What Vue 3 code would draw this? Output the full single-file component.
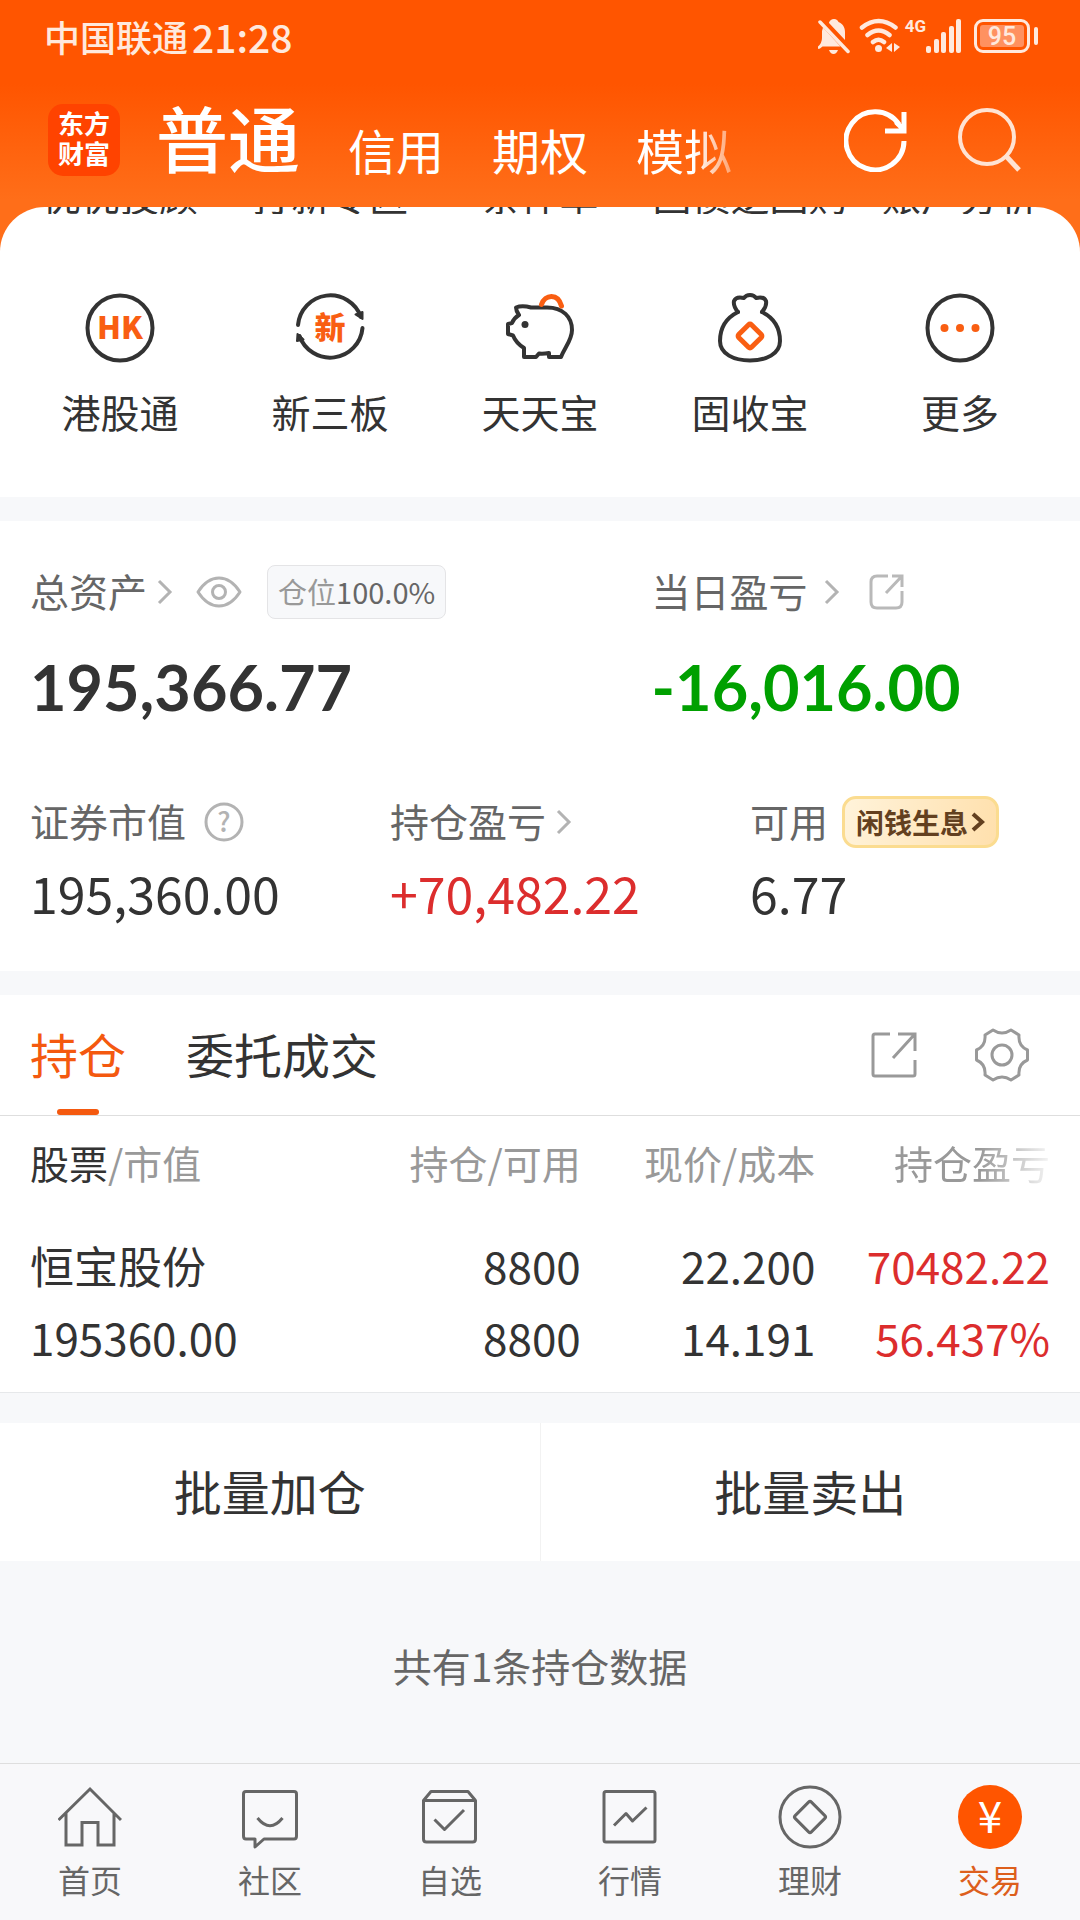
<script setup>
import { ref } from 'vue'

const accountTabs = ['普通', '信用', '期权', '模拟']
const activeAccount = ref('普通')

const clippedEntries = ['优优投顾', '打新专区', '条件单', '国债逆回购', '账户分析']
const entries = [
  { id: 'hk', label: '港股通' },
  { id: 'neeq', label: '新三板' },
  { id: 'pig', label: '天天宝' },
  { id: 'bag', label: '固收宝' },
  { id: 'more', label: '更多' },
]

const listTabs = ['持仓', '委托成交']
const activeList = ref('持仓')

const holdings = [
  {
    name: '恒宝股份',
    value: '195360.00',
    amount: '8800',
    available: '8800',
    price: '22.200',
    cost: '14.191',
    profit: '70482.22',
    rate: '56.437%',
  },
]

const navItems = [
  { id: 'home', label: '首页' },
  { id: 'community', label: '社区' },
  { id: 'watch', label: '自选' },
  { id: 'market', label: '行情' },
  { id: 'wealth', label: '理财' },
  { id: 'trade', label: '交易' },
]
const activeNav = ref('trade')
</script>

<template>
  <div class="page">
    <div class="top">
      <div class="status">
        <span class="carrier">中国联通</span>
        <span class="clock">21:28</span>
        <div class="status-icons">
          <svg class="bell" width="32" height="36" viewBox="0 0 32 36" fill="currentColor">
            <path d="M11 4.500C12 2.500 13.500 1 16 1s4 1.500 4.500 3C25 6 27 9.500 27 14v8L11 5z" />
            <path d="M5 9.500 22.500 28.500H4.500Q1 32 0 30.500V28.500Q4 25 4 20V13z" />
            <path d="M2 4 30 33.500" stroke="currentColor" stroke-width="3.500" stroke-linecap="round" />
            <path d="M11 32h9q-1.500 4-4.500 4T11 32z" />
          </svg>
          <svg class="wifi" width="42" height="36" viewBox="0 0 42 36" fill="none" stroke="currentColor" stroke-width="4.500" stroke-linecap="round">
            <path d="M3 9.500Q19.500-3.500 36.500 9.500M8.500 17Q19.500 8 30.500 17M14 24Q19.500 19.500 25 24" />
            <circle cx="19.500" cy="30.500" r="3.500" fill="currentColor" stroke="none" />
            <path d="M33 25v9l-6-4zM35 25v9l6-5z" fill="currentColor" stroke="none" />
          </svg>
          <span class="network">4G</span>
          <svg class="signal" width="36" height="36" viewBox="0 0 36 36" fill="currentColor">
            <rect x="0" y="28" width="5" height="7" rx="2" />
            <rect x="8" y="21" width="5" height="14" rx="2" />
            <rect x="15" y="14" width="5" height="21" rx="2" />
            <rect x="23" y="8" width="5" height="27" rx="2" />
            <rect x="30" y="1" width="5" height="34" rx="2" />
          </svg>
          <span class="battery"><span class="level">95</span></span>
        </div>
      </div>

      <header class="header">
        <div class="logo"><span>东方</span><span>财富</span></div>
        <nav class="accounts">
          <button
            v-for="tab in accountTabs"
            :key="tab"
            type="button"
            class="account"
            :class="{ active: tab === activeAccount }"
            @click="activeAccount = tab"
          >{{ tab }}</button>
        </nav>
        <button type="button" class="icon-btn refresh" aria-label="刷新">
          <svg width="64" height="64" viewBox="0 0 64 64" fill="none" stroke="#fff" stroke-width="5">
            <path d="M60 33A29 29 0 1 1 55 16.500" />
            <path d="M60 4V23H41M60 22 52 14" />
          </svg>
        </button>
        <button type="button" class="icon-btn" aria-label="搜索">
          <svg width="64" height="64" viewBox="0 0 64 64" fill="none" stroke="#ffe3d3" stroke-width="4">
            <circle cx="29" cy="29" r="27" />
            <path d="M48 48 61 62" stroke-width="5" />
          </svg>
        </button>
      </header>

      <section class="sheet">
        <div class="grid clipped">
          <span v-for="e in clippedEntries" :key="e">{{ e }}</span>
        </div>
        <div class="grid entries">
          <a v-for="e in entries" :key="e.id" href="#" class="entry">
            <svg width="72" height="72" viewBox="0 0 72 72" fill="none" stroke="#333" stroke-width="4" stroke-linejoin="round" stroke-linecap="round">
              <template v-if="e.id === 'hk'">
                <circle cx="36" cy="36" r="32.500" />
                <text x="36" y="47" class="glyph" font-size="31">HK</text>
              </template>
              <template v-else-if="e.id === 'neeq'">
                <path d="M4 33A32.500 32.500 0 0 1 67 25M68.500 36A32.500 32.500 0 0 1 5.500 44" />
                <path d="M61.500 22.500 68.500 20V27zM3.500 42 9.500 47.500 3 49z" fill="#333" stroke-width="2" />
                <text x="36" y="47" class="glyph" font-size="31">新</text>
              </template>
              <template v-else-if="e.id === 'pig'">
                <path d="M12 15.500Q18 13 27 15.500H43C59 15.500 68 25 68 38C68 48 61 55 57 65H45V61Q39 62 35 61.500L32 65H20V56Q12 51 9 43.500L4 42V32L8 31Q10 26 15 23Q12 19 12 15.500z" />
                <circle cx="21" cy="32.500" r="3.500" fill="#333" stroke="none" />
                <path d="M37.500 12.500C41 2 54 1 57.500 14" stroke="#f95e12" stroke-width="5" />
              </template>
              <template v-else-if="e.id === 'bag'">
                <path d="M24 20Q19 14 20 9 22 4 30 6Q32 3 36 3T42 6Q50 4 52 9 53 14 48 20" />
                <path d="M24 20C12 26 6 36 6 49S20 68.500 36 68.500 66 62 66 49 60 26 48 20" />
                <rect x="27" y="35" width="18" height="18" rx="2" transform="rotate(45 36 44)" stroke="#f95e12" stroke-width="5" />
              </template>
              <template v-else>
                <circle cx="36" cy="36" r="32.500" />
                <g fill="#f95e12" stroke="none">
                  <circle cx="20.500" cy="36" r="4" />
                  <circle cx="36" cy="36" r="4" />
                  <circle cx="51.500" cy="36" r="4" />
                </g>
              </template>
            </svg>
            <span>{{ e.label }}</span>
          </a>
        </div>
      </section>
    </div>

    <section class="assets">
      <div class="totals">
        <div class="total">
          <div class="label">
            <span class="title">总资产</span>
            <svg class="chevron" width="16" height="26" viewBox="0 0 16 26"><path d="M2 2 13 13 2 24" /></svg>
            <button type="button" class="icon-btn eye" aria-label="显示或隐藏金额">
              <svg width="46" height="32" viewBox="0 0 46 32" fill="none" stroke="#b3b3b3" stroke-width="3">
                <path d="M2 16Q11 2 23 2T44 16Q35 30 23 30T2 16z" stroke-linejoin="round" />
                <circle cx="23" cy="16" r="6.500" />
              </svg>
            </button>
            <span class="chip">仓位<b>100.0%</b></span>
          </div>
          <div class="big">195,366.77</div>
        </div>
        <div class="total">
          <div class="label">
            <span class="title">当日盈亏</span>
            <svg class="chevron wide" width="16" height="26" viewBox="0 0 16 26"><path d="M2 2 13 13 2 24" /></svg>
            <button type="button" class="icon-btn share" aria-label="分享盈亏">
              <svg width="36" height="36" viewBox="0 0 36 36" fill="none" stroke="#b9b9b9" stroke-width="3">
                <path d="M19 2H8Q2 2 2 8V28Q2 34 8 34H27Q33 34 33 28V17M23 2H33V13M33 2 17 19" />
              </svg>
            </button>
          </div>
          <div class="big down">-16,016.00</div>
        </div>
      </div>

      <div class="details">
        <div class="detail">
          <div class="label">
            <span class="title">证券市值</span>
            <svg class="help" width="40" height="40" viewBox="0 0 40 40" fill="none" stroke="#b3b3b3" stroke-width="3">
              <circle cx="20" cy="20" r="18" />
              <text x="20" y="30" text-anchor="middle" font-size="27" fill="#b3b3b3" stroke="none" font-weight="500">?</text>
            </svg>
          </div>
          <div class="value">195,360.00</div>
        </div>
        <div class="detail">
          <div class="label">
            <span class="title">持仓盈亏</span>
            <svg class="chevron" width="16" height="26" viewBox="0 0 16 26"><path d="M2 2 13 13 2 24" /></svg>
          </div>
          <div class="value up">+70,482.22</div>
        </div>
        <div class="detail">
          <div class="label">
            <span class="title">可用</span>
            <button type="button" class="promo">
              <span>闲钱生息</span>
              <svg width="14" height="20" viewBox="0 0 14 20" fill="none" stroke="#63401f" stroke-width="4"><path d="M2 2 11 10 2 18" /></svg>
            </button>
          </div>
          <div class="value">6.77</div>
        </div>
      </div>
    </section>

    <section class="positions">
      <div class="tabs">
        <button
          v-for="tab in listTabs"
          :key="tab"
          type="button"
          class="tab"
          :class="{ active: tab === activeList }"
          @click="activeList = tab"
        >{{ tab }}</button>
        <div class="tools">
          <button type="button" class="icon-btn" aria-label="分享持仓">
            <svg width="46" height="48" viewBox="1 0 46 48" fill="none" stroke="#999" stroke-width="3">
              <path d="M20 3H5Q3 3 3 5V43Q3 45 5 45H43Q45 45 45 43V29M28 3H45V20M44 4 23 27" />
            </svg>
          </button>
          <button type="button" class="icon-btn" aria-label="设置">
            <svg width="54" height="54" viewBox="0 0 54 54" fill="none" stroke="#999" stroke-width="3" stroke-linejoin="round">
              <path d="M18 2Q27 8 36 2L44 7Q43 18 52.500 22V32Q43 36 44 47L36 52Q27 46 18 52L10 47Q11 36 1.500 32V22Q11 18 10 7z" />
              <circle cx="27" cy="27" r="10" />
            </svg>
          </button>
        </div>
      </div>

      <table class="table">
        <thead>
          <tr>
            <th class="name"><em>股票</em>/市值</th>
            <th>持仓/可用</th>
            <th>现价/成本</th>
            <th class="fade">持仓盈亏</th>
          </tr>
        </thead>
        <tbody>
          <tr v-for="h in holdings" :key="h.name">
            <td class="name">{{ h.name }}<br />{{ h.value }}</td>
            <td>{{ h.amount }}<br />{{ h.available }}</td>
            <td>{{ h.price }}<br />{{ h.cost }}</td>
            <td class="up">{{ h.profit }}<br />{{ h.rate }}</td>
          </tr>
        </tbody>
      </table>
    </section>

    <div class="batch">
      <button type="button">批量加仓</button>
      <button type="button">批量卖出</button>
    </div>

    <p class="summary">共有1条持仓数据</p>

    <nav class="bottom-nav">
      <a
        v-for="n in navItems"
        :key="n.id"
        href="#"
        class="nav-item"
        :class="{ active: n.id === activeNav }"
        @click.prevent="activeNav = n.id"
      >
        <svg width="64" height="64" viewBox="0 0 64 64" fill="none" stroke="#666" stroke-width="3" stroke-linejoin="round">
          <path v-if="n.id === 'home'" d="M0.500 35 32 4 63 35M8 28V60H24V37.500H40V60H56V28" stroke-linejoin="miter" />
          <template v-else-if="n.id === 'community'">
            <path d="M8 6.500H56Q58.500 6.500 58.500 9V51Q58.500 54 56 54H26L17 62V54H8Q5.500 54 5.500 51V9Q5.500 6.500 8 6.500z" />
            <path d="M19.500 33Q32 48.500 44.500 33" />
          </template>
          <path v-else-if="n.id === 'watch'" d="M5.500 15.500H57.500V54Q57.500 57 54.500 57H8.500Q5.500 57 5.500 54V15.500L13 6.500H50L57.500 15.500M16.500 34.500 26.500 44.500 46 25" />
          <template v-else-if="n.id === 'market'">
            <rect x="6" y="6.500" width="51" height="50.500" rx="2" />
            <path d="M16 40.500 28 28.500 34.500 36 48.500 22.500" />
          </template>
          <template v-else-if="n.id === 'wealth'">
            <circle cx="32" cy="32" r="30" />
            <rect x="20.500" y="20.500" width="23" height="23" rx="2" transform="rotate(45 32 32)" />
          </template>
          <template v-else>
            <circle cx="32" cy="32" r="32" fill="#ff5500" stroke="none" />
            <text x="32" y="48" text-anchor="middle" font-size="44" fill="#fff" stroke="none">¥</text>
          </template>
        </svg>
        <span>{{ n.label }}</span>
      </a>
    </nav>
  </div>
</template>

<style>
body {
  margin: 0;
  background: #f7f8fa;
}
</style>

<style scoped>
.page {
  display: flex;
  flex-direction: column;
  min-height: 100vh;
  background: #f7f8fa;
  color: #333;
  font-family: "Noto Sans CJK SC", sans-serif;
  font-size: 39px;
  line-height: 48px;
}

button {
  margin: 0;
  padding: 0;
  border: 0;
  background: none;
  color: inherit;
  font: inherit;
  cursor: pointer;
}

a {
  color: inherit;
  text-decoration: none;
}

svg {
  display: block;
  flex: none;
}

.icon-btn {
  display: flex;
  flex: none;
}

/* top area */
.top {
  background: linear-gradient(#ff5500 0, #ff5500 84px, #ff6e19 200px);
}

.status {
  display: flex;
  align-items: center;
  height: 72px;
  padding: 0 42px 0 44px;
  color: #ffe9dd;
}

.carrier {
  font-size: 36px;
  font-weight: 500;
}

.clock {
  margin-left: 4px;
  font-size: 39px;
  font-weight: 500;
}

.status-icons {
  display: flex;
  align-items: center;
  margin-left: auto;
}

.wifi {
  margin-left: 9px;
}

.network {
  align-self: flex-start;
  margin-left: 4px;
  font: 700 17px/17px "Roboto", sans-serif;
}

.battery {
  position: relative;
  display: flex;
  box-sizing: border-box;
  width: 56px;
  height: 34px;
  margin: 0 8px 0 12px;
  padding: 3px;
  border: 3px solid currentColor;
  border-radius: 9px;
}

.battery::after {
  content: "";
  position: absolute;
  top: 5px;
  right: -11px;
  width: 4px;
  height: 18px;
  border-radius: 2px;
  background: currentColor;
}

.level {
  width: 44px;
  border-radius: 3px;
  background: #ff9160;
  font: 500 25px/23px "Roboto", sans-serif;
  text-align: center;
}

.header {
  display: flex;
  align-items: center;
  height: 135px;
  padding: 0 58px 0 48px;
  color: #fff;
}

.logo {
  display: flex;
  flex: none;
  flex-direction: column;
  box-sizing: border-box;
  width: 72px;
  height: 72px;
  padding-top: 4px;
  border-radius: 15px;
  background: #ff4300;
  font-size: 26px;
  font-weight: 700;
  line-height: 30px;
  text-align: center;
}

.accounts {
  display: flex;
  flex: 1;
  align-items: flex-end;
  gap: 48px;
  margin-left: 36px;
  padding-bottom: 8px;
}

.account {
  font-size: 48px;
  line-height: 58px;
}

.account.active {
  font-size: 72px;
  font-weight: 500;
  line-height: 84px;
}

.account:last-child {
  -webkit-mask-image: linear-gradient(90deg, #000 60%, rgba(0, 0, 0, 0.4));
  mask-image: linear-gradient(90deg, #000 60%, rgba(0, 0, 0, 0.4));
}

.refresh {
  margin-right: 50px;
}

.sheet {
  overflow: hidden;
  border-radius: 45px 45px 0 0;
  background: #fff;
}

.grid {
  display: grid;
  grid-template-columns: repeat(5, 1fr);
  padding: 0 15px;
  text-align: center;
  white-space: nowrap;
}

.clipped {
  align-content: end;
  height: 7px;
  overflow: hidden;
  line-height: 39px;
}

.entries {
  padding-top: 78px;
  padding-bottom: 58px;
}

.entry {
  display: flex;
  flex-direction: column;
  align-items: center;
  gap: 20px;
}

.entry span {
  line-height: 55px;
}

.glyph {
  fill: #f95e12;
  stroke: none;
  font-weight: 900;
  text-anchor: middle;
}

/* assets */
.assets {
  margin-top: 24px;
  padding: 41px 0 49px;
  background: #fff;
}

.label {
  display: flex;
  align-items: center;
  height: 60px;
  color: #666;
  white-space: nowrap;
}

.title {
  padding-bottom: 4px;
}

.totals {
  display: flex;
}

.total {
  flex: 42;
  padding-left: 30px;
}

.total:first-child {
  flex: 58;
}

.chevron {
  margin-left: 10px;
  fill: none;
  stroke: #b3b3b3;
  stroke-width: 3;
}

.chevron.wide {
  margin-left: 16px;
}

.eye {
  margin-left: 23px;
}

.share {
  margin-left: 29px;
}

.chip {
  box-sizing: border-box;
  height: 54px;
  margin-left: 25px;
  padding: 0 10px;
  border: 1px solid #e4e4e6;
  border-radius: 8px;
  background: #f7f8fa;
  color: #999;
  font-size: 29px;
  line-height: 50px;
}

.chip b {
  color: #666;
  font-weight: 400;
}

.big {
  margin-top: 27px;
  font-family: "Lato", sans-serif;
  font-size: 63px;
  font-weight: 700;
  line-height: 76px;
}

.down {
  color: #00a000;
}

.up {
  color: #dc2d2d;
}

.details {
  display: flex;
  margin-top: 67px;
}

.detail {
  flex: 1;
  padding-left: 30px;
}

.value {
  margin-top: 10px;
  font-size: 50px;
  line-height: 60px;
}

.help {
  margin-left: 18px;
}

.promo {
  display: flex;
  align-items: center;
  gap: 3px;
  box-sizing: border-box;
  height: 52px;
  margin-left: 14px;
  padding: 0 11px;
  border: 3px solid #fbdc90;
  border-radius: 14px;
  background: linear-gradient(100deg, #fff3da, #ffe0ad);
  color: #63401f;
  font-size: 28px;
  font-weight: 700;
  line-height: 40px;
}

/* positions */
.positions {
  margin-top: 24px;
  border-bottom: 1px solid #e6e8ea;
  background: #fff;
}

.tabs {
  display: flex;
  align-items: center;
  gap: 60px;
  height: 120px;
  padding: 0 51px 0 30px;
  border-bottom: 1px solid #dedede;
}

.tab {
  position: relative;
  height: 120px;
  padding-bottom: 4px;
  font-size: 48px;
}

.tab.active {
  color: #f4590f;
}

.tab.active::after {
  content: "";
  position: absolute;
  bottom: 0;
  left: 27px;
  width: 42px;
  height: 6px;
  border-radius: 3px;
  background: #f4590f;
}

.tools {
  display: flex;
  align-items: center;
  gap: 58px;
  margin-left: auto;
}

.table {
  box-sizing: border-box;
  width: 100%;
  padding: 0 30px;
  border-spacing: 0;
  table-layout: fixed;
  white-space: nowrap;
}

.table th,
.table td {
  width: 23%;
  padding: 0;
  text-align: right;
}

.table .name {
  width: 31%;
  text-align: left;
}

.table th {
  height: 92px;
  padding-bottom: 4px;
  color: #999;
  font-weight: 400;
}

.table em {
  color: #333;
  font-style: normal;
}

.table .fade {
  -webkit-mask-image: linear-gradient(90deg, #000 70%, rgba(0, 0, 0, 0.1));
  mask-image: linear-gradient(90deg, #000 70%, rgba(0, 0, 0, 0.1));
}

.table td {
  padding: 17px 0 19px;
  font-size: 44px;
  line-height: 72px;
}

/* batch actions */
.batch {
  display: flex;
  margin-top: 30px;
  background: #fff;
}

.batch button {
  flex: 1;
  height: 138px;
  padding-bottom: 4px;
  font-size: 48px;
}

.batch button + button {
  border-left: 1px solid #f2f2f2;
}

.summary {
  flex: 1;
  margin: 0;
  padding: 80px 0 74px;
  color: #666;
  text-align: center;
}

/* bottom navigation */
.bottom-nav {
  display: flex;
  border-top: 1px solid #dedede;
  background: #f8f8fa;
}

.nav-item {
  display: flex;
  flex: 1;
  flex-direction: column;
  align-items: center;
  gap: 7px;
  padding: 21px 0 18px;
  color: #666;
  font-size: 32px;
  line-height: 46px;
}

.nav-item.active {
  color: #dd5f1c;
}
</style>
